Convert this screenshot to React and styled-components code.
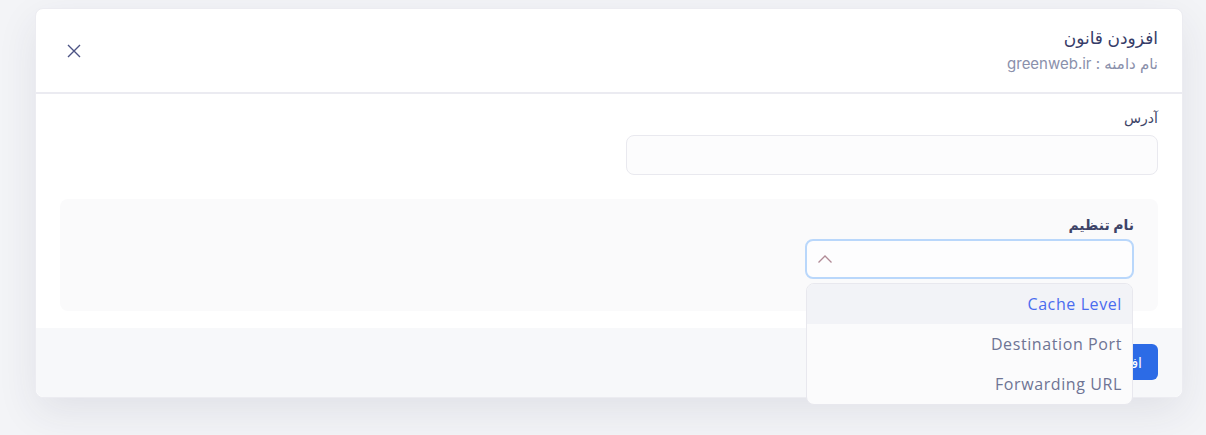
import styled, { createGlobalStyle } from 'styled-components'

const GlobalStyle = createGlobalStyle`
    body {
        margin: 0;
        background: #f3f4f7;
        font-family: Inter, "DejaVu Sans", sans-serif;
    }
`

const Page = styled.div`
    min-height: 435px;
    padding: 8px 23px 0 35px;
    box-sizing: border-box;
`

const Modal = styled.div`
    direction: rtl;
    width: 1148px;
    background: #fff;
    border: 1px solid #ececf1;
    border-radius: 8px;
    box-shadow: 0 14px 40px rgba(40, 45, 80, 0.09);
    box-sizing: border-box;
`

const Header = styled.header`
    display: flex;
    align-items: center;
    justify-content: space-between;
    height: 83px;
    padding: 0 24px 0 31px;
    border-bottom: 2px solid #ebebf1;
`

const Titles = styled.div`
    display: flex;
    flex-direction: column;
    gap: 6px;
`

const Title = styled.h2`
    margin: 0;
    font-size: 17px;
    font-weight: 500;
    color: #363c68;
`

const Subtitle = styled.p`
    margin: 0;
    font-size: 15px;
    color: #8a90ab;
`

const Close = styled.button`
    display: flex;
    border: 0;
    padding: 0;
    background: none;
    color: #4b5384;
    cursor: pointer;
`

const Body = styled.div`
    padding: 15px 24px 17px;
    display: flex;
    flex-direction: column;
    gap: 24px;
`

const Row = styled.div`
    display: grid;
    grid-template-columns: repeat(${p => p.$cols}, 1fr);
    gap: ${p => p.$gap}px;
`

const Field = styled.div`
    display: flex;
    flex-direction: column;
    gap: ${p => p.$gap ?? 9}px;
`

const Label = styled.label`
    font-size: 14px;
    font-weight: ${p => (p.$bold ? 600 : 400)};
    color: #3e4468;
`

const Input = styled.input`
    height: 40px;
    border: 1px solid #e9e9ef;
    border-radius: 8px;
    background: #fcfcfd;
    box-sizing: border-box;
    outline: none;
`

const Section = styled.div`
    background: #fafafb;
    border-radius: 8px;
    padding: 17px 24px 32px;
`

const SelectWrap = styled.div`
    position: relative;
`

const Select = styled.div`
    display: flex;
    align-items: center;
    height: 40px;
    padding: 0 10px;
    border: 2px solid #b9d7fb;
    border-radius: 8px;
    background: #fdfdfe;
    box-sizing: border-box;
    direction: ltr;
    color: #b08a96;
`

const Menu = styled.ul`
    position: absolute;
    top: calc(100% + 4px);
    left: 1px;
    right: 1px;
    margin: 0;
    padding: 0;
    list-style: none;
    background: #fbfbfc;
    border: 1px solid #e8e8ee;
    border-radius: 8px;
    overflow: hidden;
    z-index: 2;
`

const Option = styled.li`
    height: 40px;
    display: flex;
    align-items: center;
    padding: 0 10px;
    font-family: "Open Sans", sans-serif;
    font-size: 16px;
    letter-spacing: 0.6px;
    color: ${p => (p.$active ? '#4a6cef' : '#6e7494')};
    background: ${p => (p.$active ? '#f2f3f7' : 'transparent')};
`

const Footer = styled.footer`
    display: flex;
    background: #f7f8fa;
    padding: 16px 24px 17px;
    border-radius: 0 0 8px 8px;
`

const Button = styled.button`
    height: 36px;
    padding: 0 16px;
    border: 0;
    border-radius: 6px;
    background: #2c6be6;
    color: #fff;
    font-family: inherit;
    font-size: 14px;
`

const options = ['Cache Level', 'Destination Port', 'Forwarding URL']

export default function App() {
    return (
        <>
            <GlobalStyle />
            <Page>
                <Modal>
                    <Header>
                        <Titles>
                            <Title>افزودن قانون</Title>
                            <Subtitle>نام دامنه : greenweb.ir</Subtitle>
                        </Titles>
                        <Close aria-label="close">
                            <svg width="14" height="14" viewBox="0 0 14 14" fill="none" stroke="currentColor" strokeWidth="1.4">
                                <path d="M1 1l12 12M13 1L1 13" />
                            </svg>
                        </Close>
                    </Header>
                    <Body>
                        <Row $cols={2} $gap={33}>
                            <Field>
                                <Label>آدرس</Label>
                                <Input />
                            </Field>
                        </Row>
                        <Section>
                            <Row $cols={3} $gap={32}>
                                <Field $gap={6}>
                                    <Label $bold>نام تنظیم</Label>
                                    <SelectWrap>
                                        <Select>
                                            <svg width="16" height="10" viewBox="0 0 16 10" fill="none" stroke="currentColor" strokeWidth="1.3">
                                                <path d="M1.5 8.5L8 2l6.5 6.5" />
                                            </svg>
                                        </Select>
                                        <Menu>
                                            {options.map((o, i) => (
                                                <Option key={o} $active={i === 0}>{o}</Option>
                                            ))}
                                        </Menu>
                                    </SelectWrap>
                                </Field>
                            </Row>
                        </Section>
                    </Body>
                    <Footer>
                        <Button>افزودن</Button>
                    </Footer>
                </Modal>
            </Page>
        </>
    )
}
